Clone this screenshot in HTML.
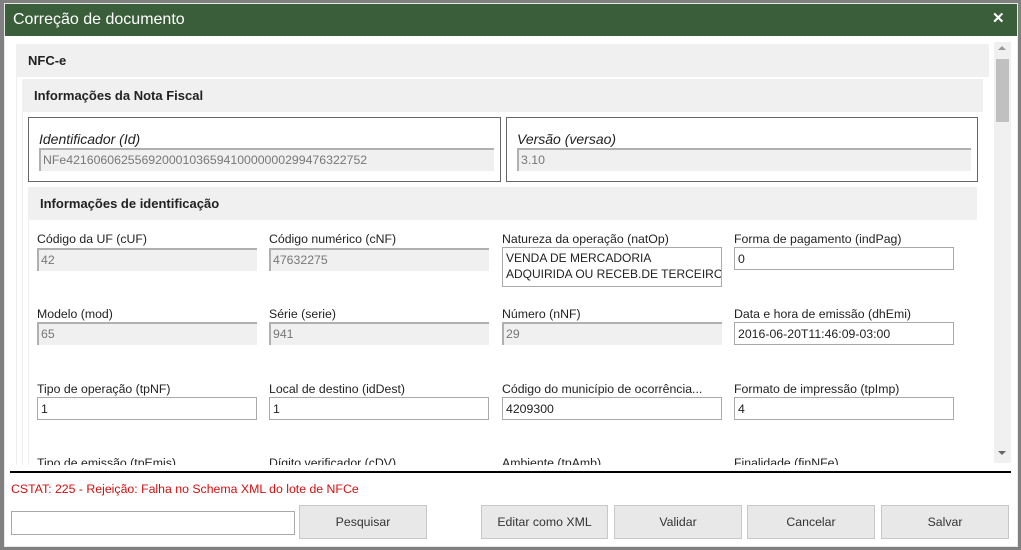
<!DOCTYPE html>
<html><head><meta charset="utf-8"><style>
*{box-sizing:border-box;margin:0;padding:0}
body{width:1021px;height:550px;background:#808080;font-family:"Liberation Sans",sans-serif;position:relative;overflow:hidden;color:#222}
.a{position:absolute}
.dlg{left:4px;top:3px;width:1014px;height:544px;background:#fff;border:1px solid #e8e8e8}
.title{left:5px;top:4px;width:1012px;height:32px;background:#3b5e3a;color:#fff;font-size:16px;line-height:32px;padding-left:8px}
.x{left:992px;top:9px;color:#fff;font-weight:bold;font-size:15px}
.hdr{background:#f0f0f0;font-weight:bold;font-size:13px;padding-left:12px}
.lbl{font-size:12.3px;color:#222;white-space:nowrap}
.in{width:220px;height:23px;border:1px solid #aaa;background:#fff;font-size:12.3px;padding:4px 3px;white-space:nowrap;overflow:hidden}
.dis{background:#f0f0f0;border:none;border-top:2px solid #b0b0b0;border-left:2px solid #b0b0b0;color:#777;padding:3px 2px}
.btn{top:505px;height:34px;background:#e8e8e8;border:1px solid #c8c8c8;font-size:12.3px;color:#333;text-align:center;line-height:32px}
.vl{top:44px;width:1px;height:421px;background:#eee}
</style></head><body>
<div class="a dlg"></div>
<div class="a title">Correção de documento</div>
<div class="a x">✕</div>

<div class="a" style="left:16px;top:44px;width:973px;height:421px;overflow:hidden;background:#fff">
</div>
<div class="a vl" style="left:16px"></div>
<div class="a vl" style="left:22px;top:79px;height:386px"></div>
<div class="a vl" style="left:28px;top:187px;height:278px"></div>
<div class="a hdr" style="left:16px;top:44px;width:973px;height:33px;line-height:33px">NFC-e</div>
<div class="a hdr" style="left:22px;top:79px;width:961px;height:33px;line-height:33px">Informações da Nota Fiscal</div>
<div class="a" style="left:28px;top:117px;width:473px;height:65px;border:1px solid #666"></div>
<div class="a" style="left:506px;top:117px;width:472px;height:65px;border:1px solid #666"></div>
<div class="a lbl" style="left:39px;top:131px;font-style:italic;font-size:14px">Identificador (Id)</div>
<div class="a in dis" style="left:39px;top:148px;width:455px;height:23px">NFe42160606255692000103659410000000299476322752</div>
<div class="a lbl" style="left:517px;top:131px;font-style:italic;font-size:14px">Versão (versao)</div>
<div class="a in dis" style="left:517px;top:148px;width:454px;height:23px">3.10</div>
<div class="a hdr" style="left:28px;top:187px;width:949px;height:33px;line-height:33px">Informações de identificação</div>

<div class="a lbl" style="left:37px;top:232px">Código da UF (cUF)</div>
<div class="a in dis" style="left:37px;top:248px">42</div>
<div class="a lbl" style="left:269px;top:232px">Código numérico (cNF)</div>
<div class="a in dis" style="left:269px;top:248px">47632275</div>
<div class="a lbl" style="left:502px;top:232px">Natureza da operação (natOp)</div>
<div class="a in" style="left:502px;top:247px;height:40px;line-height:16px;padding:2px 3px;font-size:12px">VENDA DE MERCADORIA<br>ADQUIRIDA OU RECEB.DE TERCEIRO</div>
<div class="a lbl" style="left:734px;top:232px">Forma de pagamento (indPag)</div>
<div class="a in" style="left:734px;top:247px">0</div>

<div class="a lbl" style="left:37px;top:307px">Modelo (mod)</div>
<div class="a in dis" style="left:37px;top:322px">65</div>
<div class="a lbl" style="left:269px;top:307px">Série (serie)</div>
<div class="a in dis" style="left:269px;top:322px">941</div>
<div class="a lbl" style="left:502px;top:307px">Número (nNF)</div>
<div class="a in dis" style="left:502px;top:322px">29</div>
<div class="a lbl" style="left:734px;top:307px">Data e hora de emissão (dhEmi)</div>
<div class="a in" style="left:734px;top:322px">2016-06-20T11:46:09-03:00</div>

<div class="a lbl" style="left:37px;top:382px">Tipo de operação (tpNF)</div>
<div class="a in" style="left:37px;top:397px">1</div>
<div class="a lbl" style="left:269px;top:382px">Local de destino (idDest)</div>
<div class="a in" style="left:269px;top:397px">1</div>
<div class="a lbl" style="left:502px;top:382px">Código do município de ocorrência...</div>
<div class="a in" style="left:502px;top:397px">4209300</div>
<div class="a lbl" style="left:734px;top:382px">Formato de impressão (tpImp)</div>
<div class="a in" style="left:734px;top:397px">4</div>

<div class="a" style="left:28px;top:458px;width:949px;height:7px;overflow:hidden">
<div class="a lbl" style="left:9px;top:-2px">Tipo de emissão (tpEmis)</div>
<div class="a lbl" style="left:241px;top:-2px">Dígito verificador (cDV)</div>
<div class="a lbl" style="left:474px;top:-2px">Ambiente (tpAmb)</div>
<div class="a lbl" style="left:706px;top:-2px">Finalidade (finNFe)</div>
</div>

<div class="a" style="left:994px;top:42px;width:17px;height:421px;background:#f0f0f0"></div>
<div class="a" style="left:996px;top:59px;width:13px;height:63px;background:#c0c0c0"></div>
<div class="a" style="left:998px;top:46px;width:0;height:0;border-left:4px solid transparent;border-right:4px solid transparent;border-bottom:4px solid #999"></div>
<div class="a" style="left:998px;top:451px;width:0;height:0;border-left:4px solid transparent;border-right:4px solid transparent;border-top:4px solid #666"></div>

<div class="a" style="left:10px;top:471px;width:1001px;height:2px;background:#000"></div>
<div class="a" style="left:11px;top:482px;font-size:12.3px;color:#d01010">CSTAT: 225 - Rejeição: Falha no Schema XML do lote de NFCe</div>
<div class="a" style="left:11px;top:511px;width:284px;height:24px;border:1px solid #aaa;background:#fff"></div>
<div class="a btn" style="left:299px;width:128px">Pesquisar</div>
<div class="a btn" style="left:481px;width:127px">Editar como XML</div>
<div class="a btn" style="left:614px;width:128px">Validar</div>
<div class="a btn" style="left:747px;width:128px">Cancelar</div>
<div class="a btn" style="left:881px;width:128px">Salvar</div>
</body></html>
